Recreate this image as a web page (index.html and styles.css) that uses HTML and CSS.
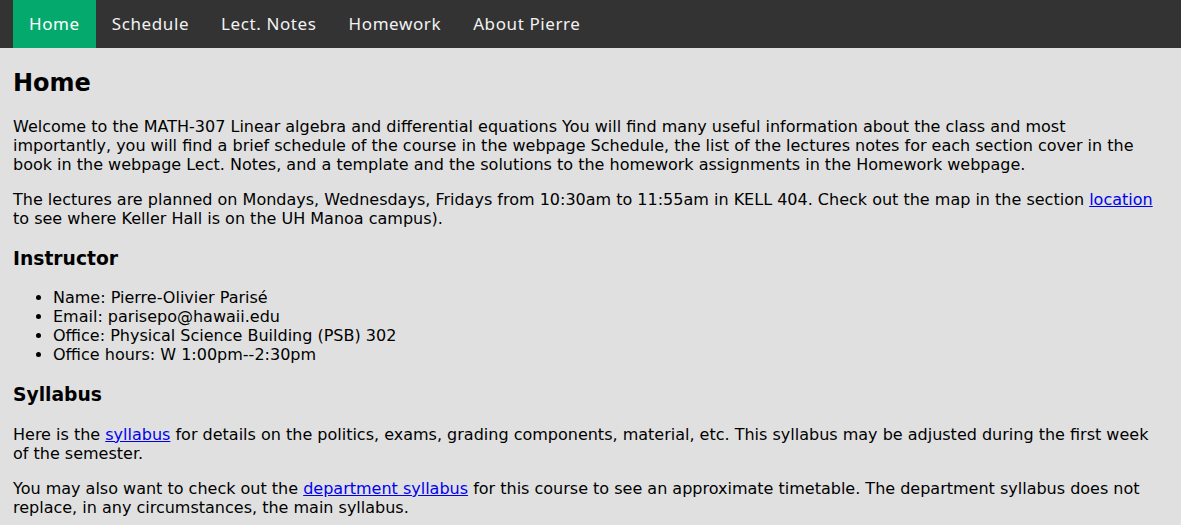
FILE: index.html
```html
<!DOCTYPE html>
<html lang="en">
<head>
<meta charset="utf-8">
<title>MATH-307 Home</title>
<link rel="stylesheet" href="styles.css">
</head>
<body>
<nav class="topnav">
  <a class="active" href="#">Home</a>
  <a href="#">Schedule</a>
  <a href="#">Lect. Notes</a>
  <a href="#">Homework</a>
  <a href="#">About Pierre</a>
</nav>
<main class="content">
  <h2 class="page-title">Home</h2>
  <p>Welcome to the MATH-307 Linear algebra and differential equations You will find many useful information about the class and most importantly, you will find a brief schedule of the course in the webpage Schedule, the list of the lectures notes for each section cover in the book in the webpage Lect. Notes, and a template and the solutions to the homework assignments in the Homework webpage.</p>
  <p>The lectures are planned on Mondays, Wednesdays, Fridays from 10:30am to 11:55am in KELL 404. Check out the map in the section <a href="#">location</a> to see where Keller Hall is on the UH Manoa campus).</p>
  <h3 class="section-title">Instructor</h3>
  <ul class="info-list">
    <li>Name: Pierre-Olivier Parisé</li>
    <li>Email: parisepo@hawaii.edu</li>
    <li>Office: Physical Science Building (PSB) 302</li>
    <li>Office hours: W 1:00pm--2:30pm</li>
  </ul>
  <h3 class="section-title">Syllabus</h3>
  <p>Here is the <a href="#">syllabus</a> for details on the politics, exams, grading components, material, etc. This syllabus may be adjusted during the first week of the semester.</p>
  <p>You may also want to check out the <a href="#">department syllabus</a> for this course to see an approximate timetable. The department syllabus does not replace, in any circumstances, the main syllabus.</p>
</main>
</body>
</html>
```
FILE: styles.css
```css
html, body {
  margin: 0;
  padding: 0;
}
body {
  background: #e0e0e0;
  color: #000;
  font-family: "DejaVu Sans", sans-serif;
  font-size: 16px;
}
.topnav {
  display: flex;
  background: #333333;
  padding-left: 13px;
  height: 48px;
}
.topnav a {
  display: block;
  color: #f2f2f2;
  font-family: "Noto Sans", sans-serif;
  font-size: 17px;
  letter-spacing: 0.6px;
  line-height: 20px;
  padding: 14px 16px;
  text-decoration: none;
}
.topnav a.active {
  background: #04aa6d;
  color: #fff;
}
.content {
  padding: 0 13px;
}
.page-title {
  font-size: 24px;
  margin: 21px 0 20px;
}
.section-title {
  font-size: 18.72px;
  line-height: 23px;
  margin: 18.72px 0;
}
.content p {
  margin: 16px 0;
}
.content a {
  color: #0000ee;
}
.info-list {
  padding-left: 40px;
  margin: 16px 0;
}
```
